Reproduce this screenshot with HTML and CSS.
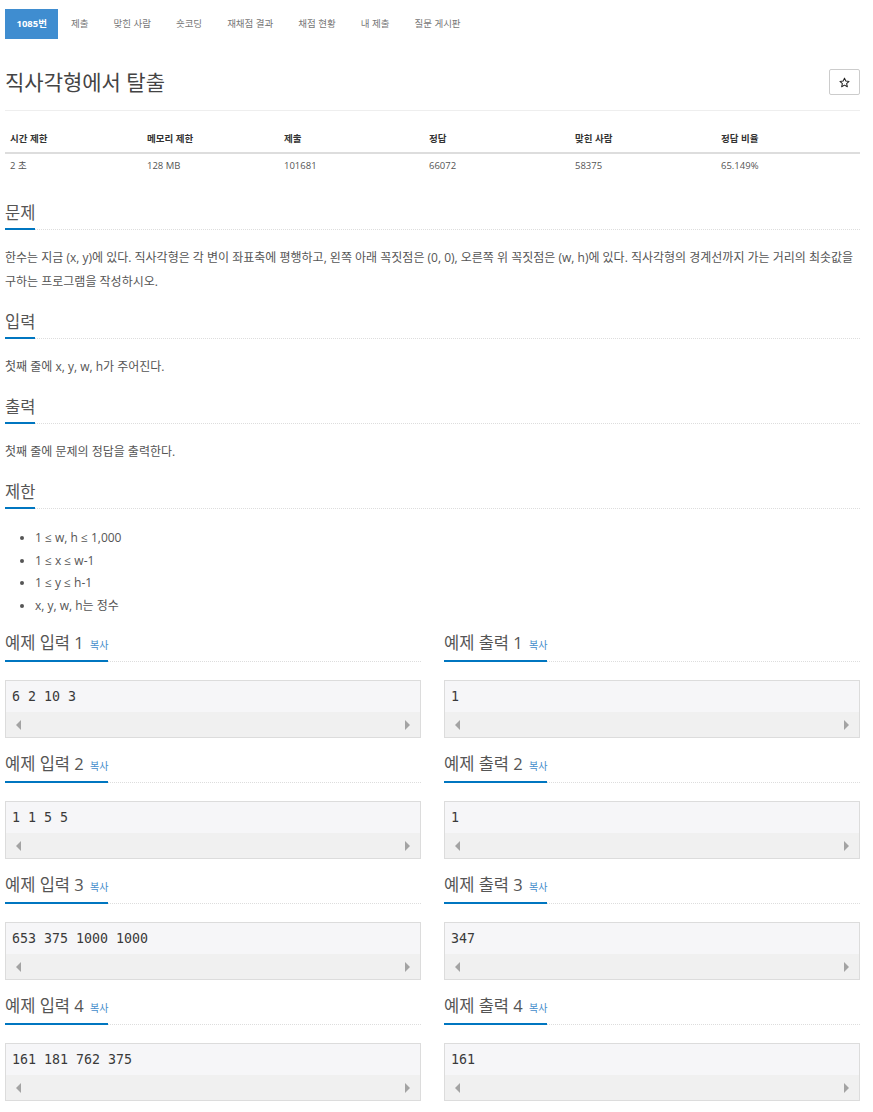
FILE: index.html
```html
<!DOCTYPE html>
<html lang="ko">
<head>
    <meta charset="UTF-8">
    <meta name="viewport" content="width=device-width, initial-scale=1.0">
    <title>직사각형에서 탈출</title>
    <link rel="stylesheet" href="styles.css">
</head>
<body>
    <div class="page">
        <!-- 문제 메뉴 -->
        <ul class="tabs">
            <li class="tab active"><a href="#">1085번</a></li>
            <li class="tab"><a href="#">제출</a></li>
            <li class="tab"><a href="#">맞힌 사람</a></li>
            <li class="tab"><a href="#">숏코딩</a></li>
            <li class="tab"><a href="#">재채점 결과</a></li>
            <li class="tab"><a href="#">채점 현황</a></li>
            <li class="tab"><a href="#">내 제출</a></li>
            <li class="tab"><a href="#">질문 게시판</a></li>
        </ul>

        <div class="title-row">
            <h1 class="problem-title">직사각형에서 탈출</h1>
            <button class="star-btn">
                <svg width="11" height="11" viewBox="0 0 24 24"><path d="M12 2.5l2.9 6.4 7 .7-5.3 4.7 1.6 6.9L12 17.6l-6.2 3.6 1.6-6.9-5.3-4.7 7-.7z" fill="none" stroke="#222" stroke-width="2.2" stroke-linejoin="round"/></svg>
            </button>
        </div>

        <table class="stats">
            <thead>
                <tr>
                    <th class="c1">시간 제한</th>
                    <th class="c2">메모리 제한</th>
                    <th class="c3">제출</th>
                    <th class="c4">정답</th>
                    <th class="c5">맞힌 사람</th>
                    <th class="c6">정답 비율</th>
                </tr>
            </thead>
            <tbody>
                <tr>
                    <td>2 초</td>
                    <td>128 MB</td>
                    <td>101681</td>
                    <td>66072</td>
                    <td>58375</td>
                    <td>65.149%</td>
                </tr>
            </tbody>
        </table>

        <section class="part">
            <div class="headline"><h2>문제</h2></div>
            <p class="text">한수는 지금 (x, y)에 있다. 직사각형은 각 변이 좌표축에 평행하고, 왼쪽 아래 꼭짓점은 (0, 0), 오른쪽 위 꼭짓점은 (w, h)에 있다. 직사각형의 경계선까지 가는 거리의 최솟값을 구하는 프로그램을 작성하시오.</p>
        </section>

        <section class="part">
            <div class="headline"><h2>입력</h2></div>
            <p class="text">첫째 줄에 x, y, w, h가 주어진다.</p>
        </section>

        <section class="part">
            <div class="headline"><h2>출력</h2></div>
            <p class="text">첫째 줄에 문제의 정답을 출력한다.</p>
        </section>

        <section class="part">
            <div class="headline"><h2>제한</h2></div>
            <ul class="limits">
                <li>1 ≤ w, h ≤ 1,000</li>
                <li>1 ≤ x ≤ w-1</li>
                <li>1 ≤ y ≤ h-1</li>
                <li>x, y, w, h는 정수</li>
            </ul>
        </section>

        <!-- 예제 -->
        <div class="samples">
            <section class="sample">
                <div class="headline"><h2>예제 입력 1 <a class="copy" href="#">복사</a></h2></div>
                <div class="sample-box"><pre>6 2 10 3</pre><div class="scroll-track"><span class="arrow-left"></span><span class="arrow-right"></span></div></div>
            </section>
            <section class="sample">
                <div class="headline"><h2>예제 출력 1 <a class="copy" href="#">복사</a></h2></div>
                <div class="sample-box"><pre>1</pre><div class="scroll-track"><span class="arrow-left"></span><span class="arrow-right"></span></div></div>
            </section>
            <section class="sample">
                <div class="headline"><h2>예제 입력 2 <a class="copy" href="#">복사</a></h2></div>
                <div class="sample-box"><pre>1 1 5 5</pre><div class="scroll-track"><span class="arrow-left"></span><span class="arrow-right"></span></div></div>
            </section>
            <section class="sample">
                <div class="headline"><h2>예제 출력 2 <a class="copy" href="#">복사</a></h2></div>
                <div class="sample-box"><pre>1</pre><div class="scroll-track"><span class="arrow-left"></span><span class="arrow-right"></span></div></div>
            </section>
            <section class="sample">
                <div class="headline"><h2>예제 입력 3 <a class="copy" href="#">복사</a></h2></div>
                <div class="sample-box"><pre>653 375 1000 1000</pre><div class="scroll-track"><span class="arrow-left"></span><span class="arrow-right"></span></div></div>
            </section>
            <section class="sample">
                <div class="headline"><h2>예제 출력 3 <a class="copy" href="#">복사</a></h2></div>
                <div class="sample-box"><pre>347</pre><div class="scroll-track"><span class="arrow-left"></span><span class="arrow-right"></span></div></div>
            </section>
            <section class="sample">
                <div class="headline"><h2>예제 입력 4 <a class="copy" href="#">복사</a></h2></div>
                <div class="sample-box"><pre>161 181 762 375</pre><div class="scroll-track"><span class="arrow-left"></span><span class="arrow-right"></span></div></div>
            </section>
            <section class="sample">
                <div class="headline"><h2>예제 출력 4 <a class="copy" href="#">복사</a></h2></div>
                <div class="sample-box"><pre>161</pre><div class="scroll-track"><span class="arrow-left"></span><span class="arrow-right"></span></div></div>
            </section>
        </div>
    </div>
</body>
</html>
```

FILE: styles.css
```css
body {
    margin: 0;
    font-family: "Open Sans", "Noto Sans CJK KR", sans-serif;
    color: #555;
    background: #fff;
}

.page {
    padding: 9px 13px 0 5px;
}

a {
    text-decoration: none;
}

/* 상단 탭 */
.tabs {
    display: flex;
    list-style: none;
    margin: 0;
    padding: 0;
}

.tab a {
    display: block;
    height: 30px;
    line-height: 30px;
    padding: 0 12.5px;
    font-size: 9.5px;
    color: #777;
}

.tab.active a {
    padding: 0 11.5px;
    background-color: #3f8dd0;
    color: #fff;
    font-weight: bold;
}

/* 제목 */
.title-row {
    display: flex;
    align-items: center;
    justify-content: space-between;
    margin-top: 29px;
    padding-bottom: 14px;
    border-bottom: 1px solid #eee;
}

.problem-title {
    margin: 0;
    font-size: 21px;
    line-height: 28px;
    font-weight: normal;
    color: #444;
}

.star-btn {
    display: flex;
    align-items: center;
    justify-content: center;
    width: 31px;
    height: 26px;
    padding: 0;
    background: #fff;
    border: 1px solid #ccc;
    border-radius: 2px;
}

/* 통계 표 */
.stats {
    width: 100%;
    margin-top: 13px;
    margin-bottom: 25px;
    border-collapse: collapse;
    font-size: 9.5px;
}

.stats th {
    text-align: left;
    padding: 8px 5px 6px;
    line-height: 14px;
    color: #333;
    border-bottom: 2px solid #ddd;
}

.stats td {
    padding: 6px 5px 5px;
    line-height: 12px;
    color: #555;
}

.stats .c1, .stats .c2 { width: 127px; }
.stats .c3 { width: 135px; }
.stats .c4, .stats .c5 { width: 136px; }

/* 본문 구역 */
.part {
    margin-top: 17px;
}

.headline {
    border-bottom: 1px dotted #ddd;
}

.headline h2 {
    display: inline-block;
    margin: 0 0 -1px;
    padding-bottom: 5px;
    font-size: 16.5px;
    line-height: 20px;
    font-weight: normal;
    color: #555;
    border-bottom: 2px solid #0076c0;
}

.text {
    margin: 16px 0 0;
    font-size: 12px;
    line-height: 24px;
}

.limits {
    margin: 18px 0 0;
    padding-left: 30px;
    font-size: 12px;
    line-height: 22.5px;
}

.copy {
    margin-left: 2px;
    font-size: 10px;
    color: #428bca;
}

/* 예제 */
.samples {
    display: grid;
    grid-template-columns: 1fr 1fr;
    column-gap: 23px;
    row-gap: 14px;
    margin-top: 14px;
}

.sample .headline h2 {
    padding-top: 2px;
    padding-bottom: 5px;
}

.sample-box {
    margin-top: 18px;
    border: 1px solid #dcdcdc;
    background: #f6f6f8;
}

.sample-box pre {
    margin: 0;
    padding: 0 6px;
    height: 31px;
    line-height: 31px;
    font-family: "DejaVu Sans Mono", monospace;
    font-size: 13.3px;
    color: #3a3a3a;
    overflow: hidden;
}

.scroll-track {
    display: flex;
    justify-content: space-between;
    align-items: center;
    height: 25px;
    padding: 0 10px;
    background: #f0f0f0;
}

.arrow-left {
    width: 0;
    height: 0;
    border-top: 5px solid transparent;
    border-bottom: 5px solid transparent;
    border-right: 5px solid #a3a3a3;
}

.arrow-right {
    width: 0;
    height: 0;
    border-top: 5px solid transparent;
    border-bottom: 5px solid transparent;
    border-left: 5px solid #a3a3a3;
}
```
